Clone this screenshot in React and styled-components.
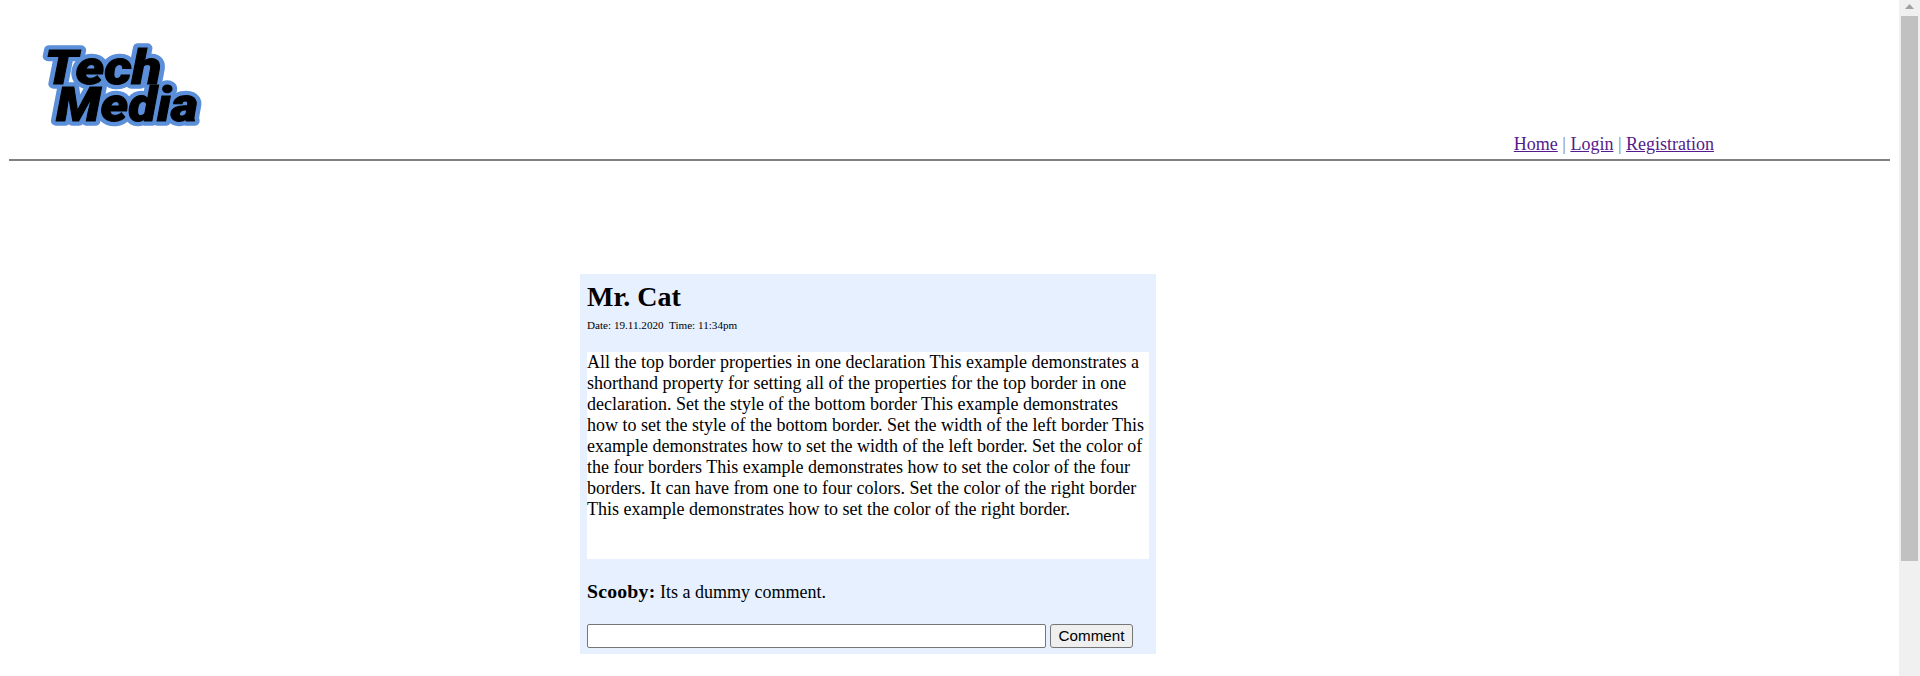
import React from 'react';
import styled, { createGlobalStyle } from 'styled-components';

const GlobalStyle = createGlobalStyle`
  * { box-sizing: border-box; }
  body {
    margin: 0;
    background: #fff;
    color: #000;
    font: 18px/21px "Liberation Serif", "Times New Roman", serif;
    overflow: hidden;
  }
`;

const Page = styled.div`
  display: flex;
  height: 676px;
`;

const Content = styled.div`
  flex: 1;
  padding: 0 9px;
`;

const Header = styled.header`
  display: flex;
  justify-content: space-between;
  align-items: flex-end;
  height: 161px;
  border-bottom: 2px solid #808080;
`;

const Logo = styled.svg`
  width: 180px;
  height: 100px;
  margin: 0 0 24px 24px;
  font-family: Roboto, "Liberation Sans", sans-serif;
  font-weight: 900;
  font-style: italic;
`;

const Nav = styled.nav`
  margin: 0 176px 4px 0;
  color: #808080;
  white-space: nowrap;
`;

const NavLink = styled.a`
  color: #551a8b;
  text-decoration: underline;
`;

const Post = styled.article`
  width: 576px;
  height: 380px;
  margin: 113px 0 0 571px;
  padding: 7px;
  background: #e6f0ff;
`;

const Author = styled.h2`
  margin: 0;
  font-size: 28px;
  line-height: 32px;
`;

const Meta = styled.p`
  margin: 6px 0 20px;
  font-size: 11.15px;
  line-height: 13px;
  white-space: pre;
`;

const Body = styled.p`
  width: 562px;
  height: 207px;
  margin: 0;
  background: #fff;
`;

const Reply = styled.p`
  height: 21px;
  margin: 23px 0 21px;
`;

const ReplyAuthor = styled.b`
  font-size: 19.8px;
  line-height: 1;
  letter-spacing: 0.2px;
`;

const Form = styled.form`
  display: flex;
  gap: 4px;
`;

const Input = styled.input`
  width: 459px;
  height: 24px;
  border: 1px solid #767676;
  border-radius: 2px;
  background: #fff;
`;

const Button = styled.button`
  width: 83px;
  height: 24px;
  padding: 0 0 2px;
  border: 1px solid #767676;
  border-radius: 3px;
  background: #efefef;
  color: #000;
  font: 15.2px "Liberation Sans", Arial, sans-serif;
`;

const Scrollbar = styled.aside`
  display: flex;
  flex-direction: column;
  align-items: center;
  width: 21px;
  background: #f0f0f0;
`;

const ScrollArrow = styled.svg`
  width: 17px;
  height: 16px;
`;

const Thumb = styled.div`
  width: 17px;
  height: 545px;
  background: #c1c1c1;
`;

export default function App() {
  return (
    <>
      <GlobalStyle />
      <Page>
        <Content>
          <Header>
            <Logo viewBox="0 0 180 100" role="img" aria-label="Tech Media">
              <defs>
                <g id="wordmark">
                  <text x="11.5" y="48.5" fontSize="48" textLength="117" lengthAdjust="spacingAndGlyphs">Tech</text>
                  <text x="23" y="85.5" fontSize="48" textLength="142" lengthAdjust="spacingAndGlyphs">Media</text>
                </g>
              </defs>
              <use href="#wordmark" fill="#5b8fd9" stroke="#5b8fd9" strokeWidth="9.5" strokeLinejoin="round" />
              <use href="#wordmark" fill="#000" stroke="#000" strokeWidth="1" />
            </Logo>
            <Nav>
              <NavLink href="#home">Home</NavLink> | <NavLink href="#login">Login</NavLink> | <NavLink href="#registration">Registration</NavLink>
            </Nav>
          </Header>
          <Post>
            <Author>Mr. Cat</Author>
            <Meta>{'Date: 19.11.2020  Time: 11:34pm'}</Meta>
            <Body>
              All the top border properties in one declaration This example demonstrates a shorthand property for setting all of the properties for the top border in one declaration. Set the style of the bottom border This example demonstrates how to set the style of the bottom border. Set the width of the left border This example demonstrates how to set the width of the left border. Set the color of the four borders This example demonstrates how to set the color of the four borders. It can have from one to four colors. Set the color of the right border This example demonstrates how to set the color of the right border.
            </Body>
            <Reply><ReplyAuthor>Scooby:</ReplyAuthor> Its a dummy comment.</Reply>
            <Form>
              <Input aria-label="Comment" />
              <Button type="button">Comment</Button>
            </Form>
          </Post>
        </Content>
        <Scrollbar>
          <ScrollArrow viewBox="0 0 17 16"><path d="M4 9 L8.5 4 L13 9 Z" fill="#a0a0a0" /></ScrollArrow>
          <Thumb />
        </Scrollbar>
      </Page>
    </>
  );
}
